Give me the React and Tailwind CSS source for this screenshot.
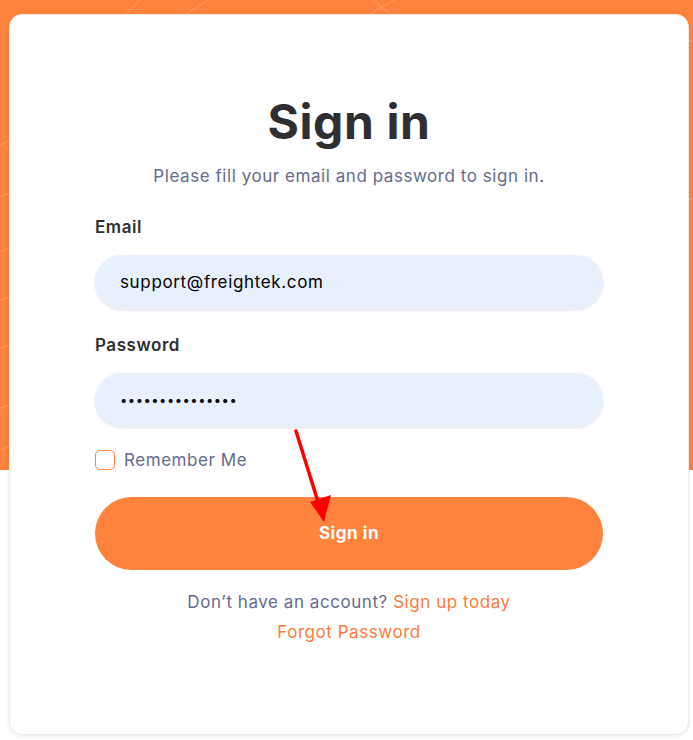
import { useState } from 'react'

export default function App() {
  const [remember, setRemember] = useState(false)

  return (
    <div className="relative min-h-[740px] bg-white font-['Inter',sans-serif] tracking-[0.55px]">
      {/* orange backdrop with faint lines */}
      <div className="absolute inset-x-0 top-0 h-[470px] overflow-hidden bg-[#ff833c]">
        <svg className="absolute inset-0 h-full w-full" viewBox="0 0 693 470" fill="none">
          <g stroke="#ffffff" strokeOpacity="0.22" strokeWidth="1">
            <path d="M126 14 C 140 0, 150 -10, 160 -20" />
            <path d="M186 14 C 200 5, 215 -5, 240 -15" />
            <path d="M370 14 C 385 5, 400 -4, 420 -12" />
            <path d="M390 14 C 380 6, 372 -2, 360 -10" />
            <path d="M0 145 L 9 141" />
            <path d="M0 197 L 9 193" />
            <path d="M0 252 L 9 248" />
            <path d="M0 300 L 9 297" />
            <path d="M0 348 L 9 345" />
            <path d="M0 408 L 9 405" />
            <path d="M0 450 L 9 446" />
            <path d="M688 40 L 693 42" />
            <path d="M688 200 L 693 198" />
          </g>
        </svg>
      </div>

      <div className="relative pl-[9px] pr-[4px] pt-[14px] pb-[5px]">
        <div className="relative flex h-[721px] flex-col items-center rounded-[13px] border border-[#ececec] bg-white px-[85px] pt-[79px] shadow-[0_1px_4px_rgba(0,0,0,0.08)]">
          <h1 className="text-[48px] font-bold leading-[56px] tracking-[0.6px] text-[#2f2f33]">Sign in</h1>
          <p className="mt-[14px] text-[17px] leading-[24px] text-[#656b8c]">Please fill your email and password to sign in.</p>

          <form className="mt-[27px] flex w-full flex-col" onSubmit={(e) => e.preventDefault()}>
            <label className="text-[17px] font-semibold leading-[24px] text-[#2f2f33]">Email</label>
            <input
              type="email"
              defaultValue="support@freightek.com"
              className="mt-[16px] h-[54px] w-full rounded-full bg-[#e8f0fe] px-[25px] text-[17px] tracking-[0.65px] text-black shadow-[0_1px_3px_rgba(0,0,0,0.12)] outline-none"
            />

            <label className="mt-[24px] text-[17px] font-semibold leading-[24px] text-[#2f2f33]">Password</label>
            <input
              type="password"
              defaultValue="freightek123456"
              className="mt-[16px] h-[54px] w-full rounded-full bg-[#e8f0fe] px-[25px] text-[13px] tracking-[0.5px] text-black shadow-[0_1px_3px_rgba(0,0,0,0.12)] outline-none"
            />

            <label className="mt-[21px] flex items-center gap-[9px] text-[17px] leading-[24px] text-[#656b8c]">
              <span
                onClick={() => setRemember(!remember)}
                className={`h-[20px] w-[20px] rounded-[5px] border border-[#ff833c] ${remember ? 'bg-[#ff833c]' : 'bg-white'}`}
              />
              Remember Me
            </label>

            <button
              type="submit"
              className="mt-[25px] h-[73px] w-full rounded-full bg-[#ff833c] text-[17px] font-bold text-white"
            >
              Sign in
            </button>
          </form>

          <p className="mt-[20px] text-[17px] leading-[24px] text-[#656b8c]">
            Don’t have an account? <a className="text-[#ff7a3a]">Sign up today</a>
          </p>
          <a className="mt-[6px] text-[17px] leading-[24px] text-[#ff7a3a]">Forgot Password</a>
        </div>
      </div>

      {/* annotation arrow */}
      <svg className="pointer-events-none absolute left-[280px] top-[425px] h-[110px] w-[70px]" viewBox="0 0 70 110">
        <line x1="16" y1="6" x2="39" y2="80" stroke="#ff0000" strokeWidth="3.5" strokeLinecap="round" />
        <polygon points="30,77 51,70 44,97" fill="#ff0000" />
      </svg>
    </div>
  )
}
